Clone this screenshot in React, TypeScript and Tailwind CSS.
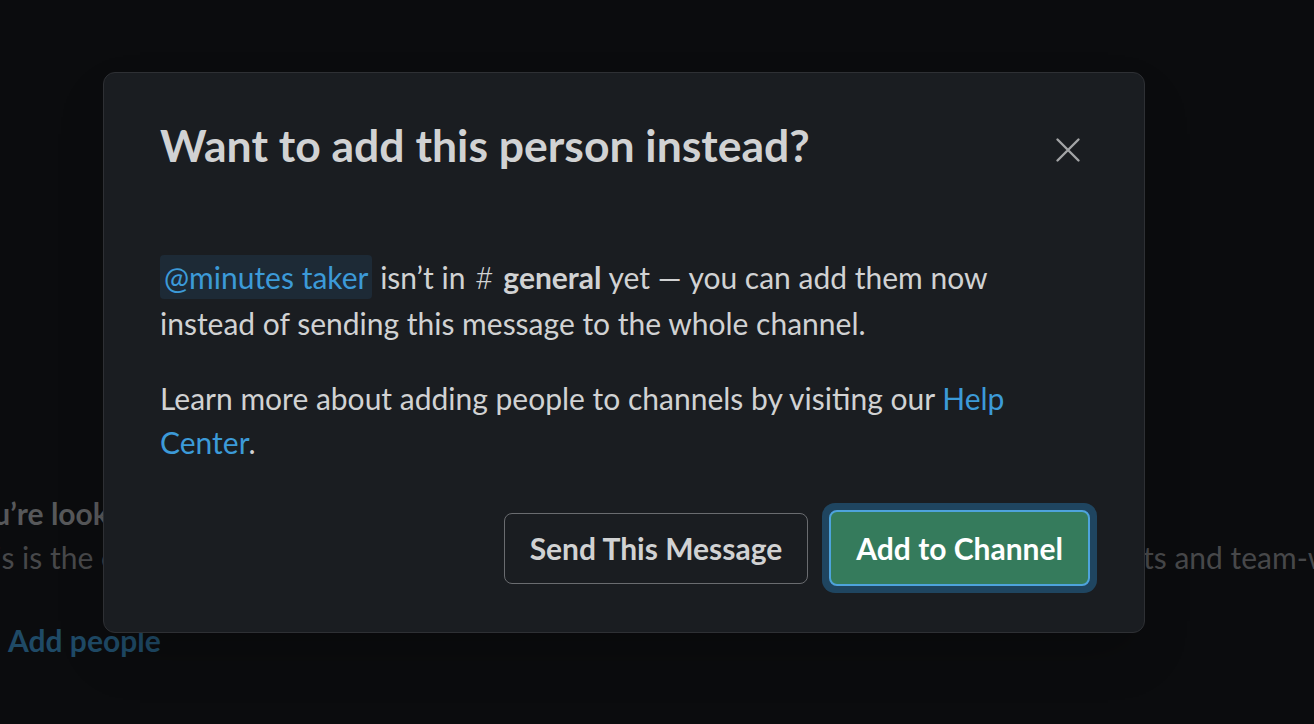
import React from 'react';

function CloseIcon() {
  return (
    <svg viewBox="0 0 24 24" className="w-[36px] h-[36px]" fill="none" stroke="#a3a4a6" strokeWidth="1.6" strokeLinecap="round">
      <path d="M5 5l14 14M19 5L5 19" />
    </svg>
  );
}

function Background() {
  return (
    <div className="pt-[490px] -ml-[40px] text-[30px] whitespace-nowrap overflow-hidden">
      <div className="font-bold text-[#57585a] leading-[46px]">You’re looking at the #general channel</div>
      <div className="flex text-[#47484a] leading-[42px]">
        <span className="w-[1183px] shrink-0 overflow-hidden">
          This is the one channel that will always include everyone. It’s a great spot for announcemen
        </span>
        <span>ts and team-wide conversations.</span>
      </div>
      <div className="mt-[42px] ml-[48px] font-bold text-[#1f4a66] leading-[40px]">Add people</div>
    </div>
  );
}

export default function App() {
  return (
    <div className="relative w-[1314px] h-[724px] overflow-hidden bg-[#0b0c0e]" style={{ fontFamily: 'Lato, "Noto Sans", sans-serif' }}>
      <Background />

      <div className="absolute left-[103px] top-[72px] w-[1042px] h-[561px] rounded-[12px] border border-[#2e3034] bg-[#1a1d21] pl-[56px] pr-[54px] pt-[46px] shadow-2xl">
        <div className="flex items-center justify-between">
          <h1 className="text-[44.5px] leading-[52px] font-bold text-[#d1d2d3]">Want to add this person instead?</h1>
          <button className="mr-[4px] mt-[10px] flex items-center justify-center">
            <CloseIcon />
          </button>
        </div>

        <div className="mt-[83px] max-w-[900px] text-[30px] leading-[46px] text-[#d1d2d3]">
          <p>
            <span className="rounded-[4px] bg-[#1d2a36] px-[4px] py-[4px] text-[#3c9ad8]">@minutes taker</span>
            {' '}isn’t in <span className="inline-block mx-[2px] text-[32px] font-light">#</span> <span className="font-bold">general</span> yet — you can add them now
            instead of sending this message to the whole channel.
          </p>
          <p className="mt-[30px] leading-[44px]">
            Learn more about adding people to channels by visiting our{' '}
            <span className="text-[#3c9ad8]">Help Center</span>.
          </p>
        </div>

        <div className="mt-[46px] flex items-center justify-end gap-[21px]">
          <button className="h-[71px] px-[25px] rounded-[8px] border border-[#6a6c70] text-[30px] font-bold text-[#d1d2d3]">
            Send This Message
          </button>
          <div className="rounded-[13px] bg-[#1f4560] p-[7px] -m-[7px]">
            <button className="h-[76px] px-[25px] rounded-[8px] border-2 border-[#4ea3dc] bg-[#357b5c] text-[30px] font-bold text-white">
              Add to Channel
            </button>
          </div>
        </div>
      </div>
    </div>
  );
}
